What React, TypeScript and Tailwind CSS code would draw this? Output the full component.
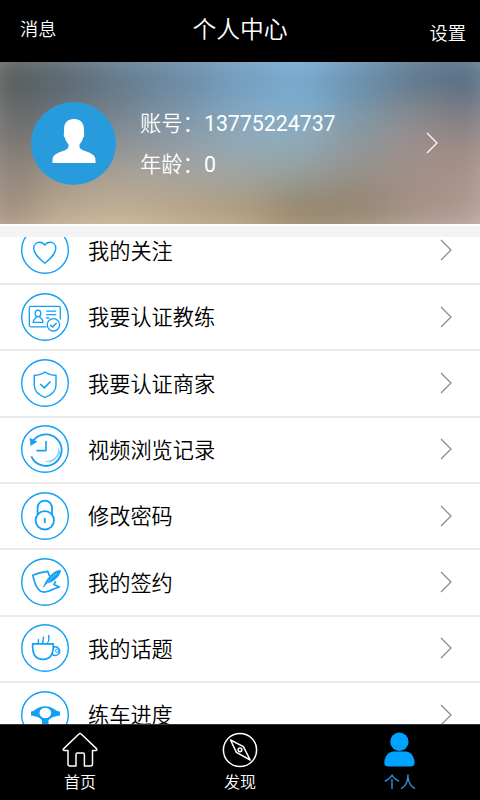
import { useState } from "react";

interface MenuItem {
  title: string;
  icon: React.ReactNode;
}

const menuItems: MenuItem[] = [
  {
    title: "我的关注",
    icon: (
      <path d="M23.8 37.2C18 32.5 12.8 28 12.8 22.3C12.8 18.6 15.2 16.2 18.4 16.2C20.7 16.2 22.8 17.4 23.8 19.2C24.8 17.4 26.9 16.2 29.2 16.2C32.4 16.2 34.8 18.6 34.8 22.3C34.8 28 29.6 32.5 23.8 37.2Z" />
    ),
  },
  {
    title: "我要认证教练",
    icon: (
      <g strokeWidth="1.3">
        <path d="M25.5 33.8H9.8a1.5 1.5 0 0 1-1.5-1.5V14.8a1.5 1.5 0 0 1 1.5-1.5H37.8a1.5 1.5 0 0 1 1.5 1.5V26.5" />
        <ellipse cx="17" cy="20.4" rx="2.8" ry="3.3" />
        <path d="M15.5 23.5c0 2-3.2 1.6-3.3 5.8h9.8c-.1-4.2-3.3-3.8-3.3-5.8M25.2 18.2h10M25.2 21.6h10M25.2 25h3" />
        <circle cx="32.4" cy="31.8" r="6.2" />
        <path d="M29.2 31.8l2.4 2.2 4-4" strokeWidth="1.6" />
      </g>
    ),
  },
  {
    title: "我要认证商家",
    icon: (
      <>
        <path d="M24 13C21 15.2 17.5 16.2 13.3 16.3V26C13.3 32.5 17.5 36 24 38.4C30.5 36 35 32.5 35 26V16.3C31 16.2 27 15.2 24 13Z" />
        <path d="M19.3 25l4 3.9 6.2-6.4" strokeWidth="1.6" />
      </>
    ),
  },
  {
    title: "视频浏览记录",
    icon: (
      <>
        <path d="M10.3 31.4A15.8 15.8 0 1 0 12.5 15.2" strokeWidth="1.8" />
        <path d="M9 13.2l7 3.6-6.3 3.8z" fill="#12a0f5" strokeWidth=".5" />
        <path d="M25 16v9.6h-9.6" strokeWidth="1.6" />
        <path d="M37.8 23.5c0 7.5-5 12.5-13 13.2" strokeWidth=".8" opacity=".7" />
        <path d="M38.8 26c-1 6-5.5 10-11 11.2" strokeWidth="1" opacity=".6" />
      </>
    ),
  },
  {
    title: "修改密码",
    icon: (
      <g strokeWidth="1.8">
        <circle cx="23.8" cy="28.3" r="9.2" />
        <path d="M16.6 22.5V15.8a7.2 7.2 0 0 1 14.4 0v6.7" />
        <path d="M23.8 26v5" />
      </g>
    ),
  },
  {
    title: "我的签约",
    icon: (
      <>
        <path
          d="M28.5 18l-1.8-4.6C21 14 16.5 15 11.8 17.2C13 23 14.5 28 17.5 31.5C19.8 34.4 24 34.5 28 33C31.5 31.5 34.5 30.2 38.3 29L33 26.4l1.8-3.2"
          strokeWidth="1.7"
        />
        <path
          d="M22.5 29.2C24.5 23.5 28 18 33 14.7C35 13.3 37.5 12 39.6 12.8C38.8 17.5 33.5 23.5 26.7 24.8C25 26 23.8 27.7 22.5 29.2Z"
          fill="#12a0f5"
          strokeWidth=".8"
        />
        <path d="M26.5 24.5C29.5 20.5 32.5 17.5 36 15.4" stroke="#fff" strokeWidth=".4" />
      </>
    ),
  },
  {
    title: "我的话题",
    icon: (
      <>
        <path
          d="M11.6 19.9H32.3V22C32.3 31 29 35.4 22 35.4C15 35.4 11.6 31 11.6 22Z"
          strokeWidth="1.7"
        />
        <path d="M32.4 23.4a4.2 4.2 0 1 1-1.2 6.5" strokeWidth="1.5" />
        <circle cx="36" cy="26.7" r="1.6" strokeWidth=".9" />
        <path d="M16.6 18.8c2.6-1.4-.6-1.8 1.2-3.6M21 18.8c3-2-.2-3.6 1.8-6M26.3 18.8c3.6-2.5-.2-4.6 2-7.8" />
      </>
    ),
  },
  {
    title: "练车进度",
    icon: (
      <path
        fill="#12a0f5"
        stroke="none"
        fillRule="evenodd"
        d="M10 20.5C14 20.5 16 15.3 24 15.3C32 15.3 34 20.5 39 20.5V24.6C35 25.5 31 25.5 27.5 29.5V40H21V29.5C18 25.5 14 25.5 10 24.6ZM24.3 16.7a5.8 5.2 0 1 0 .01 0Z"
      />
    ),
  },
];

// soft out of focus photo behind the profile, one row of tones per line
const bannerTones = [
  "#484b45", "#4b5b65", "#53718a", "#5b7f9e", "#6492b6", "#6ba4cf", "#5a88ab", "#426686", "#3f5f7e",
  "#5f6361", "#657079", "#6f808e", "#7793aa", "#7fa6c6", "#7db0d4", "#7295ad", "#7c858c", "#667280",
  "#73706c", "#828181", "#8c9195", "#8e9ca6", "#93abb9", "#91aebd", "#92999d", "#a28e8a", "#9d8782",
  "#94877a", "#aea08f", "#b5a898", "#afa79b", "#a5a39b", "#97978e", "#978c80", "#a59188", "#ad958c",
  "#a08671", "#c0aa8a", "#c8b08a", "#bc9f78", "#b49365", "#91754e", "#937c62", "#a69083", "#b19a90",
];

const tabs = ["首页", "发现", "个人"];

const TabIcon = ({ index }: { index: number }) => {
  if (index === 0)
    return (
      <svg viewBox="0 0 36 36" className="h-9 w-9" fill="none" stroke="#fff" strokeWidth="1.5" strokeLinejoin="round">
        <path d="M17.2 1.8a1.3 1.3 0 0 1 1.7 0L34.5 16.6c.8 1 .3 1.9-.8 1.9H30.5V32a2 2 0 0 1-2 2H22.4V22.5a1.5 1.5 0 0 0-1.5-1.5H15.5a1.5 1.5 0 0 0-1.5 1.5V34H8a2 2 0 0 1-2-2V18.5H2.5c-1.3 0-1.7-1-.8-1.9Z" />
      </svg>
    );
  if (index === 1)
    return (
      <svg viewBox="0 0 36 36" className="h-9 w-9" fill="none" stroke="#fff" strokeWidth="1.5" strokeLinejoin="round">
        <circle cx="18" cy="18" r="16.6" />
        <path d="M8.5 8L21.4 14.6L28.2 28L14.4 20.4Z" />
        <circle cx="18" cy="17.8" r="1.9" />
      </svg>
    );
  return (
    <svg viewBox="0 0 36 36" className="h-9 w-9" fill="#00a2ff">
      <circle cx="17.4" cy="9.7" r="9.2" />
      <path d="M11.5 19.5H23.5C29 19.5 32.6 25 32.6 31C32.6 33.5 31 34.5 28.5 34.5H6.5C4 34.5 2.3 33.5 2.3 31C2.3 25 6 19.5 11.5 19.5Z" />
    </svg>
  );
};

const Chevron = ({ color }: { color: string }) => (
  <svg viewBox="0 0 12 22" className="h-[22px] w-3 shrink-0" fill="none" stroke={color} strokeWidth="1.2">
    <path d="M1 1l10 10L1 21" />
  </svg>
);

const App = () => {
  const [active, setActive] = useState(2);

  return (
    <div className="flex h-[800px] w-[480px] flex-col overflow-hidden bg-white font-['Roboto','Noto_Sans_CJK_SC',sans-serif] font-[350]">
      <header className="flex h-[62px] shrink-0 justify-between bg-black pl-5 pr-[14px] text-white">
        <button className="h-[60px] w-[52px] text-left text-[18.2px]">消息</button>
        <h1 className="h-[60px] text-[23.8px] font-[350] leading-[61px]">个人中心</h1>
        <button className="mt-[4px] h-[60px] w-[58px] text-right text-[18.2px]">设置</button>
      </header>

      <section className="relative h-[162px] shrink-0 overflow-hidden">
        <div className="absolute -inset-x-[30px] -inset-y-[24px] grid grid-cols-9 grid-rows-5 blur-[24px]">
          {bannerTones.map((tone, i) => (
            <div key={i} style={{ backgroundColor: tone }} />
          ))}
        </div>
        <div className="relative flex h-full items-center pl-[31px] pr-[42px]">
          <svg viewBox="0 0 85 83" className="h-[83px] w-[85px] shrink-0">
            <ellipse cx="42.5" cy="41.5" rx="42.5" ry="41.5" fill="#279bdb" />
            <path
              d="M43 17C49.5 17 53 21 53 27.5V31.5C53.8 32 53 35 52 36C51.5 39 49.5 41 48.5 42.5C48 46.5 50 47.5 54 49C60 51 64.5 53 64.5 58V61H21.5V58C21.5 53 26 51 32 49C36 47.5 38 46.5 37.5 42.5C36.5 41 34.5 39 34 36C33 35 32.2 32 33 31.5V27.5C33 21 36.5 17 43 17Z"
              fill="#fff"
            />
          </svg>
          <div className="ml-6 flex-1 pt-0.5 text-[21.3px] leading-[41px] text-white">
            <p>
              账号：<span className="font-normal">13775224737</span>
            </p>
            <p>
              年龄：<span className="font-normal">0</span>
            </p>
          </div>
          <Chevron color="#fff" />
        </div>
      </section>

      <div className="h-[13px] shrink-0 border-t-2 border-white bg-[#f3f3f3]" />

      <main className="min-h-0 flex-1 overflow-hidden">
        <ul className="-mt-[18.2px]">
          {menuItems.map((item) => (
            <li
              key={item.title}
              className="flex h-[66.3px] items-center border-b-2 border-[#e9e9e9] pb-px pl-[21px] pr-[28px]"
            >
              <svg
                viewBox="0 0 48 48"
                className="h-12 w-12 shrink-0"
                fill="none"
                stroke="#12a0f5"
                strokeWidth="1.4"
                strokeLinejoin="round"
              >
                <circle cx="24" cy="24" r="23.3" />
                {item.icon}
              </svg>
              <span className="ml-[19px] flex-1 pt-[3px] text-[21.2px] text-black">{item.title}</span>
              <Chevron color="#888" />
            </li>
          ))}
        </ul>
      </main>

      <nav className="grid h-[76px] shrink-0 grid-cols-3 border-t border-[#333] bg-black">
        {tabs.map((tab, i) => (
          <button
            key={tab}
            onClick={() => setActive(i)}
            className={`flex flex-col items-center pt-[7px] text-[16px] leading-[30px] ${
              active === i ? "text-[#3fa9f5]" : "text-white"
            }`}
          >
            <TabIcon index={i} />
            {tab}
          </button>
        ))}
      </nav>
    </div>
  );
};

export default App;
